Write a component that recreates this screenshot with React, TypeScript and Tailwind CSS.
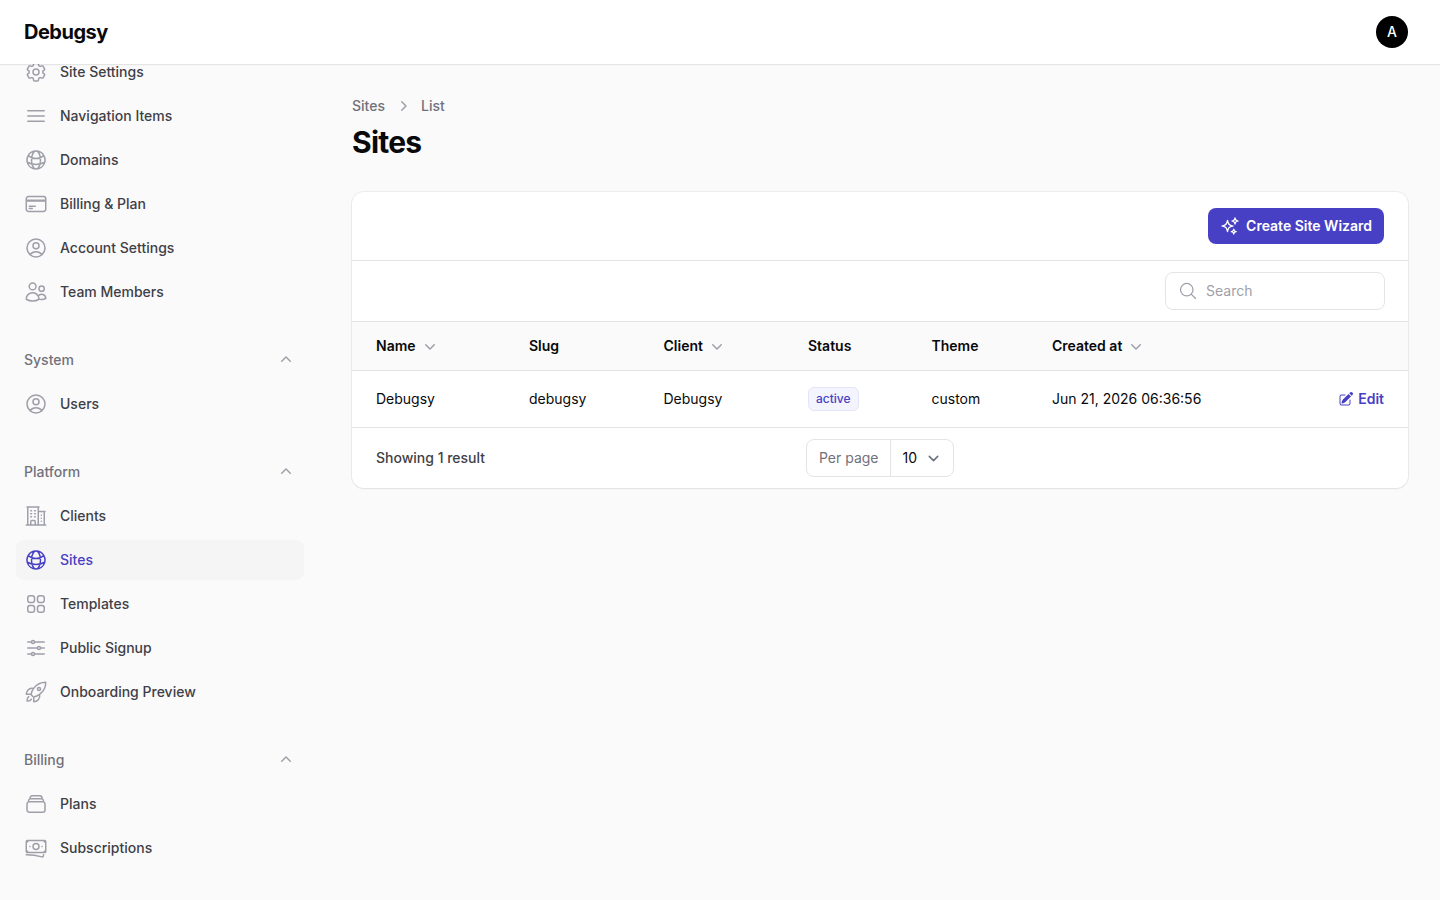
import type { ComponentType, ReactNode } from 'react';
import {
    HiMiniChevronDown,
    HiMiniChevronRight,
    HiMiniChevronUp,
    HiOutlineAdjustmentsHorizontal,
    HiOutlineBanknotes,
    HiOutlineBars3,
    HiOutlineBuildingOffice2,
    HiOutlineCog6Tooth,
    HiOutlineCreditCard,
    HiOutlineGlobeAlt,
    HiOutlineMagnifyingGlass,
    HiOutlineRectangleStack,
    HiOutlineRocketLaunch,
    HiOutlineSparkles,
    HiOutlineSquares2X2,
    HiOutlineUserCircle,
    HiOutlineUsers,
    HiPencilSquare,
} from 'react-icons/hi2';

type NavItem = { label: string; icon: ComponentType<{ className?: string }>; active?: boolean };
type NavGroup = { label?: string; items: NavItem[] };

const groups: NavGroup[] = [
    {
        items: [
            { label: 'Site Settings', icon: HiOutlineCog6Tooth },
            { label: 'Navigation Items', icon: HiOutlineBars3 },
            { label: 'Domains', icon: HiOutlineGlobeAlt },
            { label: 'Billing & Plan', icon: HiOutlineCreditCard },
            { label: 'Account Settings', icon: HiOutlineUserCircle },
            { label: 'Team Members', icon: HiOutlineUsers },
        ],
    },
    {
        label: 'System',
        items: [{ label: 'Users', icon: HiOutlineUserCircle }],
    },
    {
        label: 'Platform',
        items: [
            { label: 'Clients', icon: HiOutlineBuildingOffice2 },
            { label: 'Sites', icon: HiOutlineGlobeAlt, active: true },
            { label: 'Templates', icon: HiOutlineSquares2X2 },
            { label: 'Public Signup', icon: HiOutlineAdjustmentsHorizontal },
            { label: 'Onboarding Preview', icon: HiOutlineRocketLaunch },
        ],
    },
    {
        label: 'Billing',
        items: [
            { label: 'Plans', icon: HiOutlineRectangleStack },
            { label: 'Subscriptions', icon: HiOutlineBanknotes },
        ],
    },
];

function SortHeader({ children }: { children: ReactNode }) {
    return (
        <span className="flex items-center gap-1">
            {children}
            <HiMiniChevronDown className="w-5 h-5 text-zinc-400" />
        </span>
    );
}

function Sidebar() {
    return (
        <aside className="w-80 shrink-0 h-full overflow-hidden">
            <nav className="flex flex-col gap-y-7 px-4 -mt-3">
                {groups.map((group, i) => (
                    <div key={i} className="flex flex-col gap-y-1">
                        {group.label && (
                            <div className="h-10 flex items-center justify-between px-2">
                                <span className="text-sm font-medium text-zinc-500">{group.label}</span>
                                <HiMiniChevronUp className="w-5 h-5 text-zinc-400" />
                            </div>
                        )}
                        {group.items.map((item) => (
                            <a
                                key={item.label}
                                className={`h-10 flex items-center gap-3 px-2 rounded-lg ${item.active ? 'bg-[#f5f5f6]' : ''}`}
                            >
                                <item.icon className={`w-6 h-6 ${item.active ? 'text-[#4840c4]' : 'text-zinc-400'}`} />
                                <span className={`text-sm font-medium ${item.active ? 'text-[#4840c4]' : 'text-zinc-700'}`}>
                                    {item.label}
                                </span>
                            </a>
                        ))}
                    </div>
                ))}
            </nav>
        </aside>
    );
}

function SitesCard() {
    return (
        <div className="bg-white rounded-xl ring-1 ring-zinc-950/5 shadow-xs overflow-hidden">
            <div className="h-[68px] flex items-center justify-end px-6">
                <button className="h-9 flex items-center gap-1.5 px-3 rounded-lg bg-[#4840c4] text-sm font-semibold text-white">
                    <HiOutlineSparkles className="w-5 h-5" />
                    Create Site Wizard
                </button>
            </div>

            <div className="h-[61px] border-t border-zinc-200 flex items-center justify-end pl-6 pr-[23px]">
                <div className="w-[220px] h-[38px] flex items-center gap-2 px-3 rounded-lg border border-zinc-200 bg-white">
                    <HiOutlineMagnifyingGlass className="w-5 h-5 text-zinc-400" />
                    <span className="text-sm text-zinc-400">Search</span>
                </div>
            </div>

            <table className="w-full table-fixed border-separate border-spacing-0 text-sm text-zinc-950">
                <colgroup>
                    <col className="w-[153px]" />
                    <col className="w-[134.5px]" />
                    <col className="w-[144.5px]" />
                    <col className="w-[123.5px]" />
                    <col className="w-[120.5px]" />
                    <col className="w-[260px]" />
                    <col />
                </colgroup>
                <thead>
                    <tr className="bg-zinc-50 text-left font-semibold">
                        <th className="h-[49px] border-t border-zinc-200 px-6 font-semibold"><SortHeader>Name</SortHeader></th>
                        <th className="h-[49px] border-t border-zinc-200 px-6 font-semibold">Slug</th>
                        <th className="h-[49px] border-t border-zinc-200 px-6 font-semibold"><SortHeader>Client</SortHeader></th>
                        <th className="h-[49px] border-t border-zinc-200 px-6 font-semibold">Status</th>
                        <th className="h-[49px] border-t border-zinc-200 px-6 font-semibold">Theme</th>
                        <th className="h-[49px] border-t border-zinc-200 px-6 font-semibold"><SortHeader>Created at</SortHeader></th>
                        <th className="h-[49px] border-t border-zinc-200" />
                    </tr>
                </thead>
                <tbody>
                    <tr>
                        <td className="h-[57px] border-t border-zinc-200 px-6">Debugsy</td>
                        <td className="h-[57px] border-t border-zinc-200 px-6">debugsy</td>
                        <td className="h-[57px] border-t border-zinc-200 px-6">Debugsy</td>
                        <td className="h-[57px] border-t border-zinc-200 px-6">
                            <span className="inline-flex h-6 items-center px-[7px] rounded-md bg-[#f4f4fe] border border-[#e4e4f8] text-xs font-medium text-[#4840c4]">
                                active
                            </span>
                        </td>
                        <td className="h-[57px] border-t border-zinc-200 px-6">custom</td>
                        <td className="h-[57px] border-t border-zinc-200 px-6 whitespace-nowrap">Jun 21, 2026 06:36:56</td>
                        <td className="h-[57px] border-t border-zinc-200 px-6">
                            <a className="flex items-center justify-end gap-1 font-semibold text-[#4840c4]">
                                <HiPencilSquare className="w-4 h-4" />
                                Edit
                            </a>
                        </td>
                    </tr>
                </tbody>
            </table>

            <div className="h-[61px] border-t border-zinc-200 grid grid-cols-3 items-center px-6 text-sm">
                <span className="font-medium text-zinc-700">Showing 1 result</span>
                <div className="flex justify-center">
                    <div className="h-[38px] flex items-center rounded-lg border border-zinc-200 bg-white">
                        <span className="h-full flex items-center pl-3 pr-[11px] text-zinc-500 border-r border-zinc-200">Per page</span>
                        <span className="flex items-center gap-1.5 pl-3 pr-[9px] text-zinc-950">
                            10
                            <svg viewBox="0 0 20 20" fill="none" className="w-[21px] h-[21px]">
                                <path d="m6 8 4 4 4-4" stroke="#6b7280" strokeWidth="1.5" strokeLinecap="round" strokeLinejoin="round" />
                            </svg>
                        </span>
                    </div>
                </div>
            </div>
        </div>
    );
}

export default function App() {
    return (
        <div className="h-screen overflow-hidden flex flex-col bg-[#fafafa] font-['Inter',sans-serif]">
            <header className="relative z-10 h-16 shrink-0 flex items-center justify-between px-6 pr-8 bg-white shadow-xs ring-1 ring-zinc-950/5">
                <span className="text-xl font-bold tracking-tight text-zinc-950">Debugsy</span>
                <div className="w-8 h-8 rounded-full bg-black flex items-center justify-center text-sm font-medium text-white">A</div>
            </header>

            <div className="flex flex-1 min-h-0">
                <Sidebar />
                <main className="flex-1 min-w-0 px-8 pt-8">
                    <div className="flex items-center gap-x-2 text-sm font-medium text-zinc-500 h-5">
                        <span>Sites</span>
                        <HiMiniChevronRight className="w-5 h-5 text-zinc-400" />
                        <span>List</span>
                    </div>
                    <h1 className="mt-2 text-3xl font-bold tracking-tight text-zinc-950">Sites</h1>
                    <div className="mt-8">
                        <SitesCard />
                    </div>
                </main>
            </div>
        </div>
    );
}
